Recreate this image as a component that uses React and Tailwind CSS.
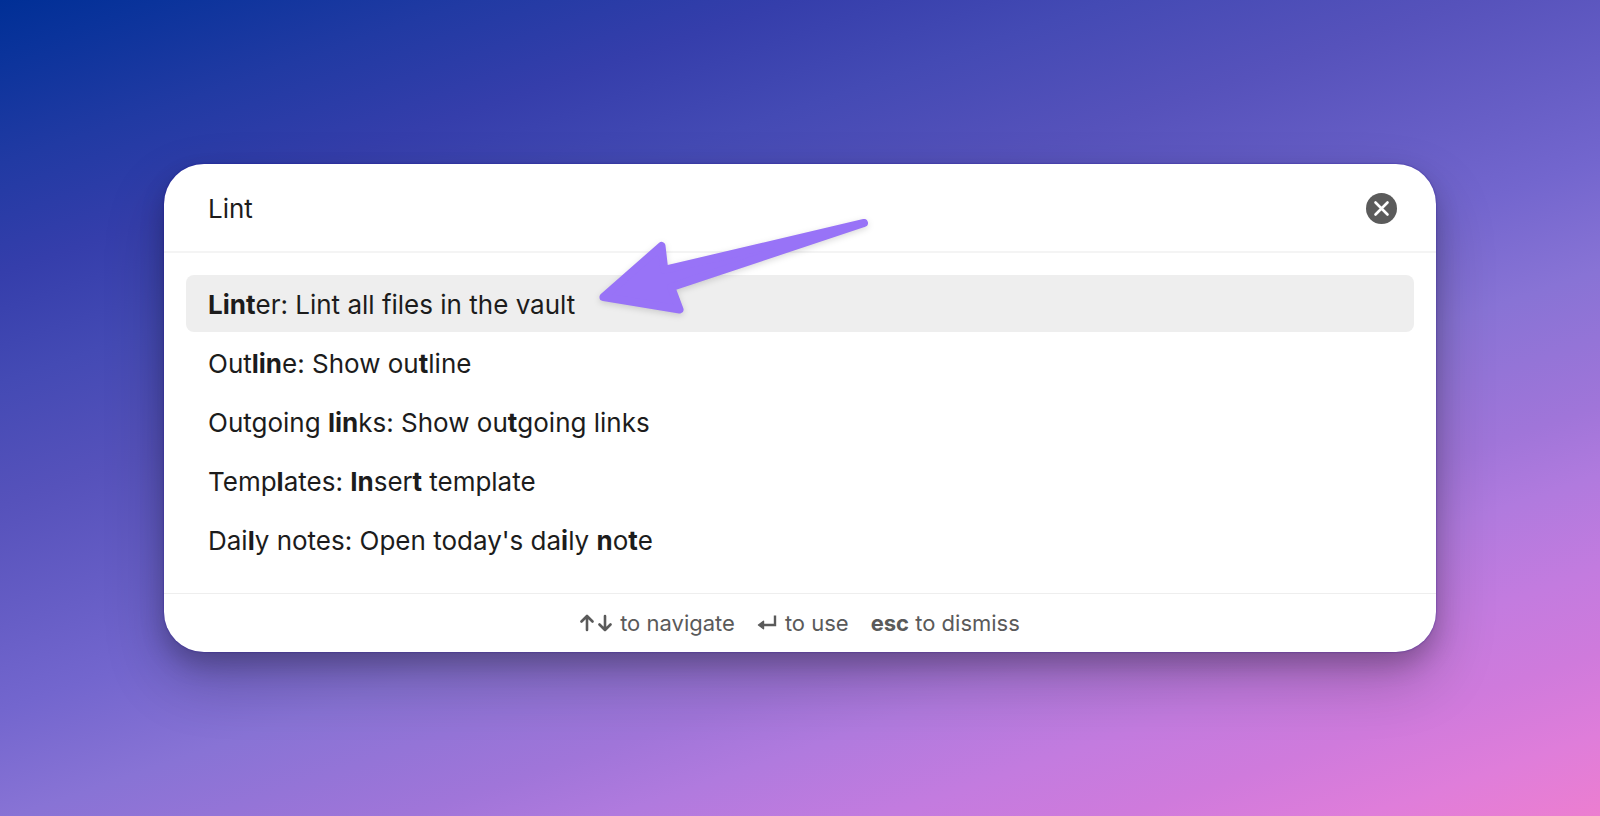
import React, { useState } from 'react';

const COMMANDS = [
  ['*Lint', 'er: Lint all files in the vault'],
  ['Out', '*lin', 'e: Show ou', '*t', 'line'],
  ['Outgoing ', '*lin', 'ks: Show ou', '*t', 'going links'],
  ['Temp', '*l', 'ates: ', '*In', 'ser', '*t', ' template'],
  ['Dai', '*l', "y notes: Open today's da", '*i', 'ly ', '*n', 'o', '*t', 'e'],
];

// parts that start with * are the matched letters
const Highlighted = ({ parts }) => (
  <span>
    {parts.map((part, i) =>
      part.startsWith('*') ? (
        <strong key={i} className="font-bold">
          {part.slice(1)}
        </strong>
      ) : (
        part
      )
    )}
  </span>
);

const ArrowKeysIcon = () => (
  <svg
    className="w-8 h-5"
    viewBox="0 0 32 20"
    fill="none"
    stroke="currentColor"
    strokeWidth="2.6"
    strokeLinecap="round"
    strokeLinejoin="round"
    aria-hidden="true"
  >
    <path d="M7 17V3M1.5 8.5L7 3L12.5 8.5" />
    <path d="M25 3V17M19.5 11.5L25 17L30.5 11.5" />
  </svg>
);

const ReturnIcon = () => (
  <svg className="w-5 h-5" viewBox="0 0 20 20" fill="none" aria-hidden="true">
    <path d="M18 2.5V12H6" stroke="currentColor" strokeWidth="2.4" />
    <path
      d="M1.5 12L6.5 8.2V15.8Z"
      fill="currentColor"
      stroke="currentColor"
      strokeWidth="1.4"
      strokeLinejoin="round"
    />
  </svg>
);

const PointerArrow = () => (
  <svg
    className="absolute left-[428px] top-[46px] w-[288px] h-[120px] pointer-events-none drop-shadow-[0_2px_3px_rgba(0,0,0,0.15)]"
    viewBox="0 0 288 120"
    aria-hidden="true"
  >
    <path
      d="M11.5 87L69.5 36L72.3 59.9L272 13L79.2 77.2L87.5 99.5Z"
      fill="#9873f7"
      stroke="#9873f7"
      strokeWidth="8"
      strokeLinejoin="round"
    />
  </svg>
);

const App = () => {
  const [query, setQuery] = useState('Lint');
  const [selected, setSelected] = useState(0);

  return (
    <main className="min-h-screen flex items-center justify-center px-6 py-10 font-['Inter',sans-serif] bg-[linear-gradient(161deg,#002f96_0%,#0a339b_4%,#213aa3_12%,#353eab_20%,#444ab4_28%,#5652bb_37%,#675ec6_46%,#7366ce_52%,#8873d5_60%,#a075d9_70%,#b07ade_75%,#c37bdf_82%,#cf7adc_88%,#df7dda_94%,#ec7ed0_100%)]">
      <div className="relative w-full max-w-[1272px] rounded-[40px] bg-white text-[#1c1c1c] shadow-[0_0_2px_rgba(20,0,140,0.6),0_12px_24px_rgba(0,0,0,0.2),0_28px_60px_rgba(0,0,0,0.22)]">
        <div className="flex items-center h-[89px] pt-[2px] pl-11 pr-[39px] border-b-2 border-[#f4f4f4]">
          <input
            type="text"
            aria-label="Search commands"
            value={query}
            onChange={(e) => setQuery(e.target.value)}
            className="flex-1 min-w-0 text-[26px] leading-8 bg-transparent outline-none"
          />
          <button type="button" aria-label="Clear search" onClick={() => setQuery('')}>
            <svg className="w-[31px] h-[31px]" viewBox="0 0 31 31" aria-hidden="true">
              <circle cx="15.5" cy="15.5" r="15.5" fill="#5b5b5b" />
              <path
                d="M9.5 9.5L21.5 21.5M21.5 9.5L9.5 21.5"
                stroke="white"
                strokeWidth="2.6"
                strokeLinecap="round"
              />
            </svg>
          </button>
        </div>

        <ul className="flex flex-col gap-[2px] px-[22px] pt-[22px] pb-[25px]">
          {COMMANDS.map((parts, i) => (
            <li key={i}>
              <button
                type="button"
                onClick={() => setSelected(i)}
                className={`w-full h-[57px] px-[22px] pt-[2px] rounded-lg text-left text-[26px] leading-8 ${
                  i === selected ? 'bg-[#eeeeee]' : ''
                }`}
              >
                <Highlighted parts={parts} />
              </button>
            </li>
          ))}
        </ul>

        <div className="flex items-center justify-center gap-[22px] h-[59px] border-t border-[#eeeeee] text-[22px] leading-7 text-[#5a5a5a]">
          <span className="flex items-center gap-2">
            <ArrowKeysIcon />
            to navigate
          </span>
          <span className="flex items-center gap-2">
            <ReturnIcon />
            to use
          </span>
          <span>
            <strong className="font-bold">esc</strong> to dismiss
          </span>
        </div>

        <PointerArrow />
      </div>
    </main>
  );
};

export default App;
